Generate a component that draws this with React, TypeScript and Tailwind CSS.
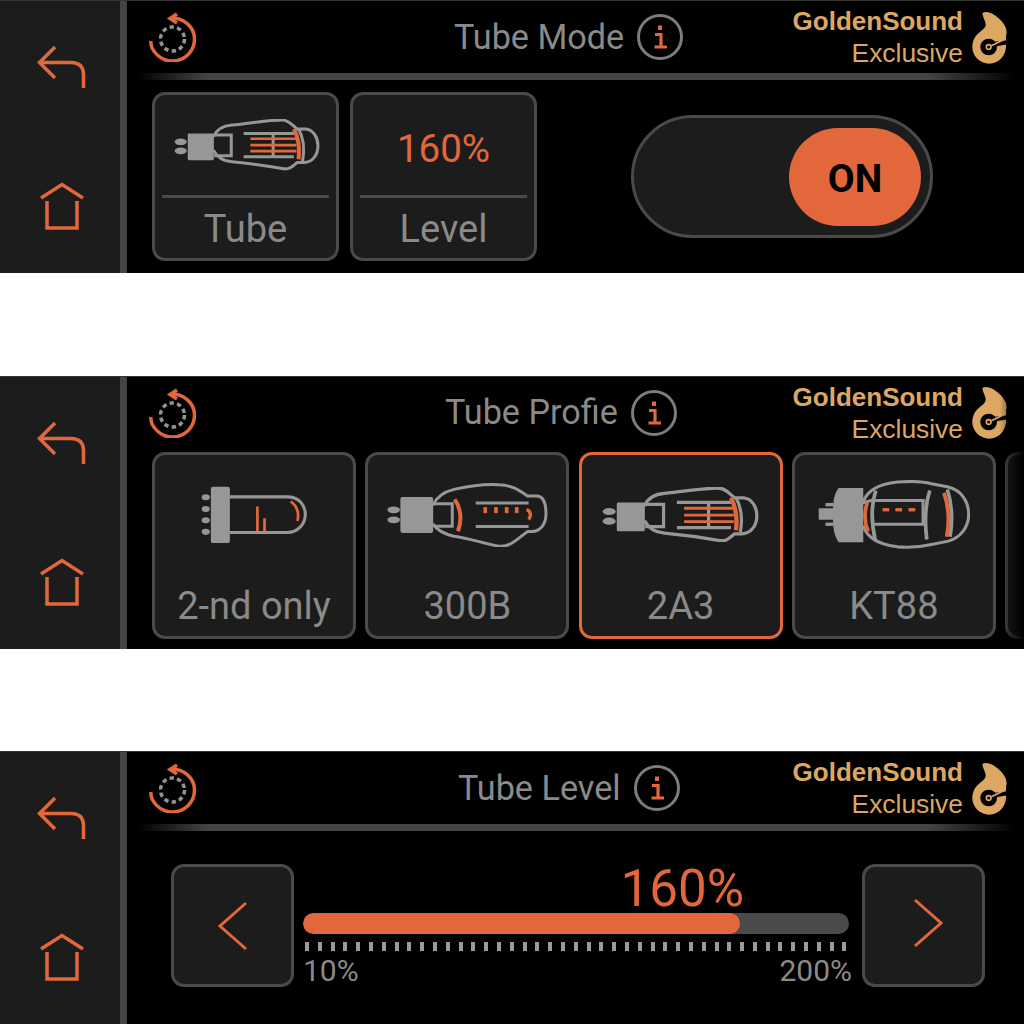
const ORANGE = '#e2683c';
const GREY = '#979797';
const GOLD = '#dba762';
const TICK_COUNT = 43;

function BackIcon() {
  return (
    <svg width="50" height="44" viewBox="37 44 50 44" fill="none" stroke={ORANGE} strokeWidth="3.5">
      <path d="M55 46 L39.5 61.5 L55 77 M39.5 61.5 H71 Q83.5 61.5 83.5 74 V87" />
    </svg>
  );
}

function HomeIcon() {
  return (
    <svg width="46" height="48" viewBox="39 181 46 48" fill="none" stroke={ORANGE} strokeWidth="3.5">
      <path d="M41 197 L62 183.5 L83 197 M47 200 V227 H77 V200" />
    </svg>
  );
}

function ResetIcon() {
  return (
    <svg width="50" height="50" viewBox="148 13 50 50" fill="none" className="shrink-0">
      <circle cx="172.5" cy="40" r="12" stroke="#939393" strokeWidth="3.5" strokeDasharray="4.4 3.2" />
      <path
        d="M170.5 19.5 C183 18 194.5 28 194.5 40 C194.5 52.5 184.5 62 172.5 62 C160 62 150 51 151 42"
        stroke={ORANGE}
        strokeWidth="3.5"
      />
      <path d="M177 15 L170 19.5 L177 24" stroke={ORANGE} strokeWidth="3.5" />
    </svg>
  );
}

function InfoIcon() {
  return (
    <svg width="46" height="46" viewBox="0 0 46 46" fill="none" className="shrink-0">
      <circle cx="23" cy="23" r="21.5" stroke="#7d7d7d" strokeWidth="3" />
      <path d="M18 20.5 H24 V33 M17.5 33 H30" stroke={ORANGE} strokeWidth="3.2" />
      <rect x="21" y="11.5" width="4" height="4.5" fill={ORANGE} />
    </svg>
  );
}

function BrandLogo() {
  return (
    <svg width="40" height="55" viewBox="60 32 120 165" className="mt-[2px] shrink-0">
      <path
        fill={GOLD}
        d="M97 38 C112 30 130 40 146 54 C162 68 175 88 168 106 L168 140 C166 168 146 190 118 190 C90 190 67 168 67 140 C67 124 72 114 80 104 C90 92 108 84 107 72 C106 60 98 50 97 38 Z"
      />
      <circle cx="116" cy="140" r="25" fill="#000" />
      <path d="M134 124 L172 120 L172 132 L140 138 Z" fill="#000" />
      <circle cx="116" cy="140" r="7" fill="none" stroke={GOLD} strokeWidth="5" />
      <path d="M124 136 L164 117" stroke={GOLD} strokeWidth="5" />
    </svg>
  );
}

function Tube2A3({ width }: { width: number }) {
  return (
    <svg width={width} viewBox="42 42 436 155" fill="none">
      <ellipse cx="62" cy="110" rx="18" ry="10" fill={GREY} />
      <ellipse cx="62" cy="137" rx="18" ry="10" fill={GREY} />
      <rect x="83" y="85" width="78" height="80" rx="4" fill={GREY} />
      <g stroke={GREY} strokeWidth="9">
        <path d="M160 95 C170 70 190 62 215 60 C270 55 320 45 365 45 C385 45 395 60 410 72 L435 72 C460 74 472 100 472 122 C472 150 455 172 430 172 L410 172 C395 185 385 195 365 190 C320 182 270 175 215 170 C190 168 170 155 160 135" />
        <path d="M162 90 H213 V152 H162" />
        <path d="M250 85 H400 M250 155 H400 M338 85 V155" />
        <path d="M414 72 C430 100 432 135 426 168" />
      </g>
      <g stroke={ORANGE}>
        <path d="M270 101 H406 M270 120 H408 M270 138 H408" strokeWidth="8" />
        <path d="M400 72 C415 100 418 130 414 162" strokeWidth="12" />
      </g>
    </svg>
  );
}

function Tube300B() {
  return (
    <svg width="162" viewBox="712 100 484 197" fill="none">
      <ellipse cx="735" cy="183" rx="19" ry="10" fill={GREY} />
      <ellipse cx="735" cy="213" rx="19" ry="10" fill={GREY} />
      <rect x="755" y="145" width="98" height="107" rx="6" fill={GREY} />
      <g stroke={GREY} strokeWidth="9">
        <path d="M852 170 C865 140 890 128 915 122 C960 112 1010 105 1050 108 C1090 110 1110 125 1135 142 L1165 142 C1185 145 1190 170 1190 195 C1190 225 1175 245 1150 248 L1135 248 C1110 265 1085 295 1050 292 C1010 285 960 268 915 262 C885 255 865 245 852 225" />
        <path d="M855 165 H910 V232 H855" />
        <path d="M980 163 H1138 M980 233 H1138" />
      </g>
      <g fill={ORANGE}>
        <rect x="1003" y="175" width="11" height="18" />
        <rect x="1035" y="175" width="11" height="18" />
        <rect x="1067" y="175" width="11" height="18" />
        <rect x="1097" y="175" width="11" height="18" />
      </g>
      <path d="M917 152 C938 180 938 220 927 247" stroke={ORANGE} strokeWidth="12" />
      <path d="M1132 182 C1146 188 1146 202 1138 212" stroke={ORANGE} strokeWidth="10" />
    </svg>
  );
}

function TubeSecondOnly() {
  return (
    <svg width="106" viewBox="156 115 312 170" fill="none">
      <ellipse cx="170" cy="148" rx="12" ry="9" fill={GREY} />
      <ellipse cx="170" cy="183" rx="12" ry="9" fill={GREY} />
      <ellipse cx="170" cy="216" rx="12" ry="9" fill={GREY} />
      <ellipse cx="170" cy="250" rx="12" ry="9" fill={GREY} />
      <rect x="185" y="117" width="56" height="166" rx="6" fill={GREY} />
      <path d="M240 147 H410 C445 147 463 172 463 198 C463 228 440 252 410 252 H240" stroke={GREY} strokeWidth="9" />
      <path d="M322 175 V248 M343 210 V248 M420 160 C440 175 445 195 440 218" stroke={ORANGE} strokeWidth="8" />
    </svg>
  );
}

function TubeKT88() {
  return (
    <svg width="152" viewBox="714 94 450 202" fill="none">
      <rect x="716" y="178" width="50" height="34" rx="2" fill={GREY} />
      <rect x="736" y="162" width="24" height="10" fill={GREY} />
      <rect x="736" y="220" width="24" height="10" fill={GREY} />
      <path d="M775 118 H848 V278 H775 C762 260 758 240 758 195 C758 155 762 135 775 118 Z" fill={GREY} />
      <g stroke={GREY} strokeWidth="9">
        <path d="M848 160 C860 120 900 105 950 100 C990 97 1020 97 1050 105 L1100 115 C1140 125 1160 160 1160 195 C1160 235 1135 265 1100 275 L1050 285 C1020 292 990 295 950 292 C900 285 860 270 848 230" />
        <path d="M875 155 H1030 M875 225 H1030 M1025 150 V225 M845 162 L880 152 M840 230 L865 240" />
      </g>
      <g stroke={GREY} strokeWidth="11">
        <path d="M885 125 C872 165 872 220 883 270" />
        <path d="M1045 125 C1030 170 1030 220 1036 270" />
        <path d="M1097 122 C1112 170 1112 220 1105 262" />
      </g>
      <path d="M1087 132 C1100 170 1105 210 1095 262" stroke={ORANGE} strokeWidth="11" />
      <path d="M860 160 C850 190 850 215 862 247" stroke={ORANGE} strokeWidth="11" />
      <g fill={ORANGE}>
        <rect x="905" y="177" width="20" height="10" />
        <rect x="943" y="177" width="20" height="10" />
        <rect x="982" y="177" width="20" height="10" />
      </g>
    </svg>
  );
}

function Sidebar() {
  return (
    <div className="flex w-[127px] shrink-0 flex-col items-center border-r-[7px] border-[#444] bg-[#1c1c1c] pt-[44px] pl-[4px]">
      <BackIcon />
      <div className="h-[93px]" />
      <HomeIcon />
    </div>
  );
}

function Brand() {
  return (
    <div className="ml-auto flex items-center pr-[14px]">
      <div className="flex flex-col items-end font-['Liberation_Sans',sans-serif] leading-[32px] text-[#dba762]">
        <span className="text-[26px] font-bold">GoldenSound</span>
        <span className="text-[26.4px]">Exclusive</span>
      </div>
      <div className="ml-[7px]">
        <BrandLogo />
      </div>
    </div>
  );
}

function Header({ title, offset }: { title: string; offset: string }) {
  return (
    <div className="flex h-[72px] items-center pl-[21px]">
      <ResetIcon />
      <div className={`flex items-center ${offset}`}>
        <span className="text-[34.2px] leading-none text-[#8a8a8a]">{title}</span>
        <div className="ml-[13px]">
          <InfoIcon />
        </div>
      </div>
      <Brand />
    </div>
  );
}

function HeaderRule() {
  return (
    <div className="mr-[8px] ml-[11px] h-[7px] bg-[linear-gradient(90deg,transparent_0%,#444_8%,#444_90%,transparent_100%)]" />
  );
}

function Panel({ children }: { children: React.ReactNode }) {
  return (
    <div className="flex h-[273px] overflow-hidden border-t border-[#333] bg-black font-['Roboto',sans-serif]">
      <Sidebar />
      <div className="relative min-w-0 flex-1">{children}</div>
    </div>
  );
}

function ValueCard({ children, label }: { children: React.ReactNode; label: string }) {
  return (
    <div className="flex h-[169px] w-[187px] flex-col rounded-[13px] border-[3px] border-[#4a4a4a] bg-[#1c1c1c]">
      <div className="flex h-[100px] items-center justify-center">{children}</div>
      <div className="mx-[7px] h-[3px] bg-[#4a4a4a]" />
      <div className="flex h-[60px] items-center justify-center pt-[3px] text-[38px] text-[#8a8a8a]">{label}</div>
    </div>
  );
}

function TubeCard({
  children,
  label,
  selected = false,
}: {
  children?: React.ReactNode;
  label?: string;
  selected?: boolean;
}) {
  return (
    <div
      className={`flex h-[187px] w-[204px] shrink-0 flex-col rounded-[13px] border-[3px] bg-[#1c1c1c] ${
        selected ? 'border-[#e2683c]' : 'border-[#4a4a4a]'
      }`}
    >
      <div className="flex h-[120px] items-center justify-center">{children}</div>
      <div className="flex h-[61px] items-center justify-center pt-[2px] text-[38px] text-[#8a8a8a]">{label}</div>
    </div>
  );
}

function ArrowButton({ direction }: { direction: 'left' | 'right' }) {
  return (
    <div className="flex size-[123px] shrink-0 items-center justify-center rounded-[13px] border-[3px] border-[#4a4a4a] bg-[#1c1c1c]">
      <svg
        width="32"
        height="50"
        viewBox="0 0 32 50"
        fill="none"
        stroke={ORANGE}
        strokeWidth="3"
        className={direction === 'right' ? 'mb-[6px] ml-[8px]' : ''}
      >
        <path d={direction === 'left' ? 'M29 2 L3 25 L29 48' : 'M3 2 L29 25 L3 48'} />
      </svg>
    </div>
  );
}

function TubeModePanel() {
  return (
    <Panel>
      <Header title="Tube Mode" offset="ml-[256px]" />
      <HeaderRule />
      <div className="flex pt-[12px] pl-[25px]">
        <ValueCard label="Tube">
          <div className="pl-[2px]">
            <Tube2A3 width={146} />
          </div>
        </ValueCard>
        <div className="ml-[11px]">
          <ValueCard label="Level">
            <span className="pt-[8px] text-[38.5px] text-[#e2683c]">160%</span>
          </ValueCard>
        </div>
        <div className="mt-[23px] ml-[94px] flex h-[123px] w-[302px] items-center justify-end rounded-full border-[3px] border-[#4a4a4a] bg-[#1c1c1c] pr-[9px]">
          <div className="flex h-[98px] w-[132px] items-center justify-center rounded-full bg-[#e2683c] pt-[5px] text-[39px] font-bold text-black">
            ON
          </div>
        </div>
      </div>
    </Panel>
  );
}

function TubeProfilePanel() {
  return (
    <Panel>
      <Header title="Tube Profie" offset="ml-[247px]" />
      <div className="flex gap-[9.3px] pt-[3px] pl-[25px]">
        <TubeCard label="2-nd only">
          <TubeSecondOnly />
        </TubeCard>
        <TubeCard label="300B">
          <Tube300B />
        </TubeCard>
        <TubeCard label="2A3" selected>
          <Tube2A3 width={157} />
        </TubeCard>
        <TubeCard label="KT88">
          <TubeKT88 />
        </TubeCard>
        <TubeCard />
      </div>
      <div className="absolute top-0 right-0 h-full w-[24px] bg-linear-to-r from-transparent to-black" />
    </Panel>
  );
}

function TubeLevelPanel() {
  return (
    <Panel>
      <Header title="Tube Level" offset="ml-[260px]" />
      <HeaderRule />
      <div className="flex pt-[33px] pl-[44px]">
        <ArrowButton direction="left" />
        <div className="ml-[9px] w-[546px] shrink-0">
          <div className="flex h-[49px] items-center justify-end pr-[105px] text-[51px] leading-none text-[#e2683c]">
            160%
          </div>
          <div className="h-[21px] overflow-hidden rounded-full bg-[#4a4a4a]">
            <div className="h-full w-[80%] rounded-full bg-[#e2683c]" />
          </div>
          <div className="mt-[8px] flex justify-between px-[2px]">
            {Array.from({ length: TICK_COUNT }, (_, i) => (
              <div key={i} className="h-[9px] w-[4px] bg-[#9a9a9a]" />
            ))}
          </div>
          <div className="-mr-[3px] mt-[5px] flex justify-between text-[30px] leading-[30px] text-[#8a8a8a]">
            <span>10%</span>
            <span>200%</span>
          </div>
        </div>
        <div className="ml-[13px]">
          <ArrowButton direction="right" />
        </div>
      </div>
    </Panel>
  );
}

export default function App() {
  return (
    <div className="flex h-[1024px] w-[1024px] flex-col justify-between bg-white">
      <TubeModePanel />
      <TubeProfilePanel />
      <TubeLevelPanel />
    </div>
  );
}
